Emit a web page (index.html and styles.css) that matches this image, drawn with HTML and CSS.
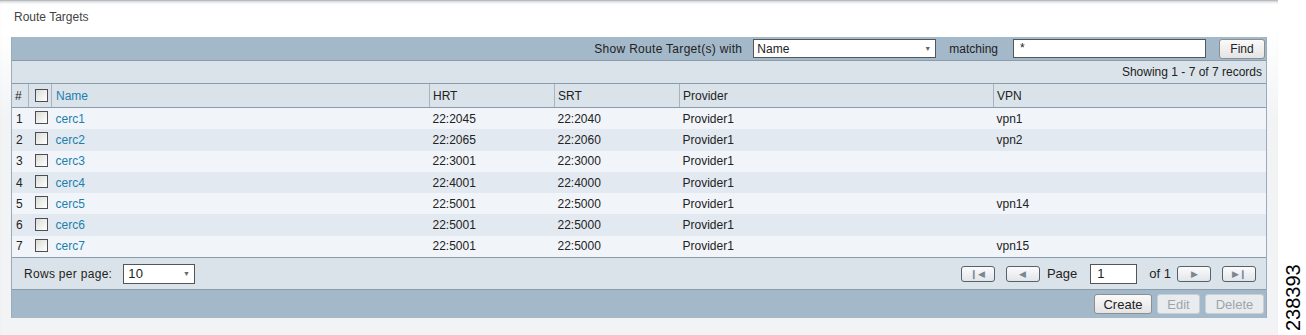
FILE: index.html
```html
<!DOCTYPE html>
<html lang="en">
<head>
    <meta charset="UTF-8">
    <link rel="stylesheet" href="styles.css">
    <title>Route Targets</title>
</head>
<body>
    <div class="pagina">
        <div class="titulo">Route Targets</div>

        <div class="painel">
            <div class="filtro">
                <span class="texto">Show Route Target(s) with</span>
                <div class="combo largo"><span>Name</span><span class="seta">&#9660;</span></div>
                <span class="matching">matching</span>
                <div class="caixa busca">*</div>
                <button type="button" class="botao">Find</button>
            </div>

            <div class="info">Showing 1 - 7 of 7 records</div>

            <table class="grade">
                <tr class="cabecalho">
                    <th class="c-num">#</th>
                    <th class="c-chk"><span class="marca"></span></th>
                    <th class="c-nome"><a>Name</a></th>
                    <th class="c-hrt">HRT</th>
                    <th class="c-srt">SRT</th>
                    <th class="c-prov">Provider</th>
                    <th>VPN</th>
                </tr>
                <tr><td>1</td><td><span class="marca"></span></td><td><a>cerc1</a></td><td>22:2045</td><td>22:2040</td><td>Provider1</td><td>vpn1</td></tr>
                <tr><td>2</td><td><span class="marca"></span></td><td><a>cerc2</a></td><td>22:2065</td><td>22:2060</td><td>Provider1</td><td>vpn2</td></tr>
                <tr><td>3</td><td><span class="marca"></span></td><td><a>cerc3</a></td><td>22:3001</td><td>22:3000</td><td>Provider1</td><td></td></tr>
                <tr><td>4</td><td><span class="marca"></span></td><td><a>cerc4</a></td><td>22:4001</td><td>22:4000</td><td>Provider1</td><td></td></tr>
                <tr><td>5</td><td><span class="marca"></span></td><td><a>cerc5</a></td><td>22:5001</td><td>22:5000</td><td>Provider1</td><td>vpn14</td></tr>
                <tr><td>6</td><td><span class="marca"></span></td><td><a>cerc6</a></td><td>22:5001</td><td>22:5000</td><td>Provider1</td><td></td></tr>
                <tr><td>7</td><td><span class="marca"></span></td><td><a>cerc7</a></td><td>22:5001</td><td>22:5000</td><td>Provider1</td><td>vpn15</td></tr>
            </table>

            <div class="paginacao">
                <div class="linhas">
                    <span>Rows per page:</span>
                    <div class="combo curto"><span>10</span><span class="seta">&#9660;</span></div>
                </div>
                <div class="navegacao">
                    <button type="button" class="nav">&#10073;&#9664;</button>
                    <button type="button" class="nav">&#9664;</button>
                    <span class="rotulo">Page</span>
                    <div class="caixa pagina-num">1</div>
                    <span class="rotulo">of 1</span>
                    <button type="button" class="nav proximo">&#9654;</button>
                    <button type="button" class="nav">&#9654;&#10073;</button>
                </div>
            </div>

            <div class="acoes">
                <button type="button" class="botao criar">Create</button>
                <button type="button" class="botao inativo editar">Edit</button>
                <button type="button" class="botao inativo apagar">Delete</button>
            </div>
        </div>
    </div>

    <div class="figura">238393</div>
</body>
</html>
```

FILE: styles.css
```css
body {
    margin: 0;
    background-color: white;
    font-family: "Liberation Sans", Arial, sans-serif;
    font-size: 12px;
    color: #222;
}

.pagina {
    width: 1278px;
    height: 335px;
    background: linear-gradient(#ffffff 0, #ffffff 30px, #f1f3f5 120px, #f1f3f5 100%);
    border-top: 1px solid #b8bcc0;
    box-shadow: inset 0 3px 3px -2px #c4c8cc;
    box-sizing: border-box;
}

.titulo {
    padding: 9px 14px 0 14px;
    height: 27px;
    line-height: 14px;
    color: #444;
}

.painel {
    margin: 0 11px;
    border-left: 1px solid #9aabba;
    border-right: 1px solid #9aabba;
}

.filtro {
    display: flex;
    align-items: center;
    justify-content: flex-end;
    height: 23px;
    padding-right: 1px;
    background-color: #a3b8c9;
    border-bottom: 1px solid #8a9bab;
}

.texto {
    letter-spacing: 0.3px;
}

.combo {
    display: flex;
    align-items: center;
    justify-content: space-between;
    height: 19px;
    box-sizing: border-box;
    background-color: white;
    border: 1px solid #555;
    padding: 0 4px 0 3px;
}

.seta {
    font-size: 7px;
    color: #666;
}

.largo {
    width: 183px;
    margin-left: 11px;
}

.curto {
    width: 72px;
    height: 20px;
    margin-left: 11px;
    padding-left: 4px;
    font-size: 13px;
}

.matching {
    margin-left: 13px;
}

.caixa {
    height: 19px;
    line-height: 17px;
    box-sizing: border-box;
    background-color: white;
    border: 1px solid #555;
    padding-left: 6px;
}

.busca {
    width: 193px;
    margin-left: 15px;
}

.botao {
    height: 20px;
    padding: 0;
    font-family: "Liberation Sans", Arial, sans-serif;
    font-size: 12px;
    color: #222;
    background: linear-gradient(#fafafa, #e4e4e4);
    border: 1px solid #8a8f94;
    border-radius: 3px;
}

.filtro .botao {
    width: 46px;
    margin-left: 13px;
}

.inativo {
    color: #a0a4a8;
    background: #e8ecef;
    border-color: #c8d0d6;
}

.info {
    height: 22px;
    line-height: 23px;
    text-align: right;
    padding-right: 4px;
    background-color: #dbe3ea;
    border-bottom: 1px solid #8a9bab;
}

.grade {
    width: 100%;
    border-collapse: collapse;
    table-layout: fixed;
}

.grade td,
.grade th {
    padding: 0 0 0 3px;
    text-align: left;
    font-weight: normal;
    white-space: nowrap;
}

.grade td {
    height: 21.3px;
}

.cabecalho th {
    height: 23px;
    background-color: #dbe3ea;
    border-left: 1px solid #ffffff;
    border-right: 1px solid #a7b4bf;
    border-bottom: 1px solid #8a9bab;
}

.cabecalho th:first-child {
    border-left: none;
}

.cabecalho th:last-child {
    border-right: none;
}

.c-num { width: 13px; }
.c-chk { width: 19px; }
.c-nome { width: 373px; }
.c-hrt { width: 121px; }
.c-srt { width: 121px; }
.c-prov { width: 310px; }

.grade tr:nth-child(even) td {
    background-color: #f1f5f9;
}

.grade tr:nth-child(odd) td {
    background-color: #e2e9f0;
}

.grade tr:last-child td {
    border-bottom: 1px solid #8a9bab;
}

.grade td:first-child {
    padding-left: 4px;
}

.grade td:nth-child(3),
.grade th:nth-child(3) {
    padding-left: 4px;
}

a {
    color: #1b80ae;
}

.marca {
    display: block;
    width: 11px;
    height: 11px;
    margin-left: 3px;
    border: 1px solid #4a4f55;
    background: linear-gradient(135deg, #dcdcd6, #ffffff);
}

.grade td .marca {
    margin-top: -2px;
}

.paginacao {
    display: flex;
    align-items: center;
    justify-content: space-between;
    height: 31px;
    padding: 0 10px 0 12px;
    background-color: #dbe3ea;
    border-bottom: 1px solid #8a9bab;
}

.linhas,
.navegacao {
    display: flex;
    align-items: center;
}

.linhas {
    font-size: 12px;
    letter-spacing: 0.3px;
}

.nav {
    width: 34px;
    height: 16px;
    padding: 0;
    margin-left: 11px;
    font-size: 9px;
    color: #7d858e;
    background: linear-gradient(#fafbfc, #e2e6ea);
    border: 1px solid #56616c;
    border-radius: 3px;
}

.proximo {
    margin-left: 6px;
}

.rotulo {
    font-size: 13px;
    margin-left: 7px;
}

.pagina-num {
    width: 47px;
    height: 20px;
    margin-left: 13px;
    margin-right: 5px;
    font-size: 13px;
}

.acoes {
    display: flex;
    justify-content: flex-end;
    gap: 5px;
    height: 28px;
    align-items: center;
    padding-right: 2px;
    background-color: #a3b8c9;
}

.acoes .botao {
    font-size: 13px;
}

.criar { width: 58px; }
.editar { width: 43px; }
.apagar { width: 59px; }

.figura {
    position: absolute;
    left: 1282px;
    top: 331px;
    transform: rotate(-90deg);
    transform-origin: left top;
    font-size: 20px;
    color: black;
}
```
